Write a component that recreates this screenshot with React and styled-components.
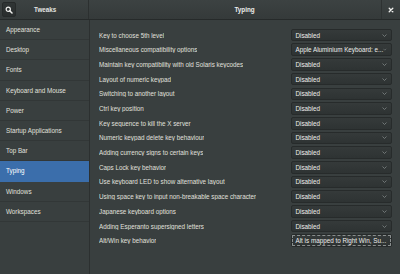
import React from "react";
import styled, { createGlobalStyle } from "styled-components";

const sections = [
  "Appearance",
  "Desktop",
  "Fonts",
  "Keyboard and Mouse",
  "Power",
  "Startup Applications",
  "Top Bar",
  "Typing",
  "Windows",
  "Workspaces",
];

const options = [
  ["Key to choose 5th level", "Disabled"],
  ["Miscellaneous compatibility options", "Apple Aluminium Keyboard: e..."],
  ["Maintain key compatibility with old Solaris keycodes", "Disabled"],
  ["Layout of numeric keypad", "Disabled"],
  ["Switching to another layout", "Disabled"],
  ["Ctrl key position", "Disabled"],
  ["Key sequence to kill the X server", "Disabled"],
  ["Numeric keypad delete key behaviour", "Disabled"],
  ["Adding currency signs to certain keys", "Disabled"],
  ["Caps Lock key behavior", "Disabled"],
  ["Use keyboard LED to show alternative layout", "Disabled"],
  ["Using space key to input non-breakable space character", "Disabled"],
  ["Japanese keyboard options", "Disabled"],
  ["Adding Esperanto supersigned letters", "Disabled"],
  ["Alt/Win key behavior", "Alt is mapped to Right Win, Su..."],
];

const GlobalStyle = createGlobalStyle`
  html, body {
    margin: 0;
    padding: 0;
    background: #393f3f;
  }
  body {
    font-family: "Liberation Sans", Arial, sans-serif;
  }
`;

const App = () => {
  return (
    <Window>
      <GlobalStyle />
      <HeaderBar>
        <SideHeader>
          <SearchButton>
            <svg width="8" height="8" viewBox="0 0 16 16">
              <circle cx="6.5" cy="6.5" r="4.2" fill="none" stroke="#eeeeec" strokeWidth="2.4" />
              <path d="M9.5 9.5 L14 14" stroke="#eeeeec" strokeWidth="3" strokeLinecap="round" />
            </svg>
          </SearchButton>
          <SideTitle>Tweaks</SideTitle>
        </SideHeader>
        <MainHeader>
          <MainTitle>Typing</MainTitle>
          <CloseArea>
            <svg width="6" height="6" viewBox="0 0 10 10">
              <path d="M2 2 L8 8 M8 2 L2 8" stroke="#eeeeec" strokeWidth="2.2" strokeLinecap="round" />
            </svg>
          </CloseArea>
        </MainHeader>
      </HeaderBar>
      <Body>
        <Sidebar>
          {sections.map((name) => (
            <SideRow key={name} selected={name === "Typing"}>
              {name}
            </SideRow>
          ))}
        </Sidebar>
        <Content>
          {options.map(([label, value], i) => (
            <OptionRow key={label}>
              <Label>{label}</Label>
              <Combo focused={i === options.length - 1}>
                <ComboText>{value}</ComboText>
                <svg width="5" height="3" viewBox="0 0 10 6">
                  <path d="M1 1 L5 5 L9 1" fill="none" stroke="#8a9090" strokeWidth="1.4" />
                </svg>
              </Combo>
            </OptionRow>
          ))}
        </Content>
      </Body>
    </Window>
  );
};

export default App;

const Window = styled.div`
  width: 400px;
  height: 274px;
  display: flex;
  flex-direction: column;
  background: #393f3f;
  color: #e8e8e6;
  overflow: hidden;
`;

const HeaderBar = styled.div`
  display: flex;
  height: 19px;
  border-bottom: 1px solid #262a2a;
  background: linear-gradient(#3c4242, #353a3a);
`;

const SideHeader = styled.div`
  width: 89px;
  display: flex;
  align-items: center;
  border-right: 1px solid #2c3030;
  padding-left: 2px;
  box-sizing: border-box;
`;

const SearchButton = styled.div`
  width: 14px;
  height: 15px;
  border-radius: 2px;
  background: linear-gradient(#2f3434, #2a2e2e);
  border: 1px solid #262a2a;
  box-sizing: border-box;
  display: flex;
  align-items: center;
  justify-content: center;
`;

const SideTitle = styled.div`
  font-size: 6.3px;
  font-weight: bold;
  margin-left: 18px;
  color: #e4e4e2;
`;

const MainHeader = styled.div`
  flex: 1;
  display: flex;
  align-items: center;
`;

const MainTitle = styled.div`
  flex: 1;
  text-align: center;
  font-size: 6.3px;
  font-weight: bold;
  padding-left: 19px;
  color: #eeeeec;
`;

const CloseArea = styled.div`
  width: 19px;
  height: 19px;
  border-left: 1px solid #2e3232;
  box-sizing: border-box;
  display: flex;
  align-items: center;
  justify-content: center;
`;

const Body = styled.div`
  flex: 1;
  display: flex;
  min-height: 0;
`;

const Sidebar = styled.div`
  width: 89px;
  flex-shrink: 0;
  border-right: 1px solid #2c3030;
  background: #393f3f;
`;

const SideRow = styled.div`
  height: 20.2px;
  box-sizing: border-box;
  display: flex;
  align-items: center;
  padding-left: 6px;
  font-size: 6.3px;
  border-bottom: 1px solid ${(p) => (p.selected ? "#3b6eab" : "#323737")};
  background: ${(p) => (p.selected ? "#3b6eab" : "transparent")};
  color: ${(p) => (p.selected ? "#ffffff" : "#e0e0de")};
`;

const Content = styled.div`
  flex: 1;
  padding: 8.8px 8px 0 9px;
  display: flex;
  flex-direction: column;
  gap: 2.1px;
`;

const OptionRow = styled.div`
  display: flex;
  align-items: center;
  justify-content: space-between;
  height: 12.6px;
`;

const Label = styled.div`
  font-size: 6.3px;
  color: #e0e0de;
  white-space: nowrap;
  overflow: hidden;
`;

const Combo = styled.div`
  width: 101px;
  height: 12.6px;
  flex-shrink: 0;
  box-sizing: border-box;
  display: flex;
  align-items: center;
  justify-content: space-between;
  padding: 0 4px 0 3.5px;
  border-radius: 2px;
  border: 1px solid #272b2b;
  background: linear-gradient(#353a3a, #2e3333);
  outline: ${(p) => (p.focused ? "1px dashed #8a8f8f" : "none")};
  outline-offset: -2.5px;
`;

const ComboText = styled.div`
  font-size: 6.3px;
  color: #eeeeec;
  white-space: nowrap;
`;
